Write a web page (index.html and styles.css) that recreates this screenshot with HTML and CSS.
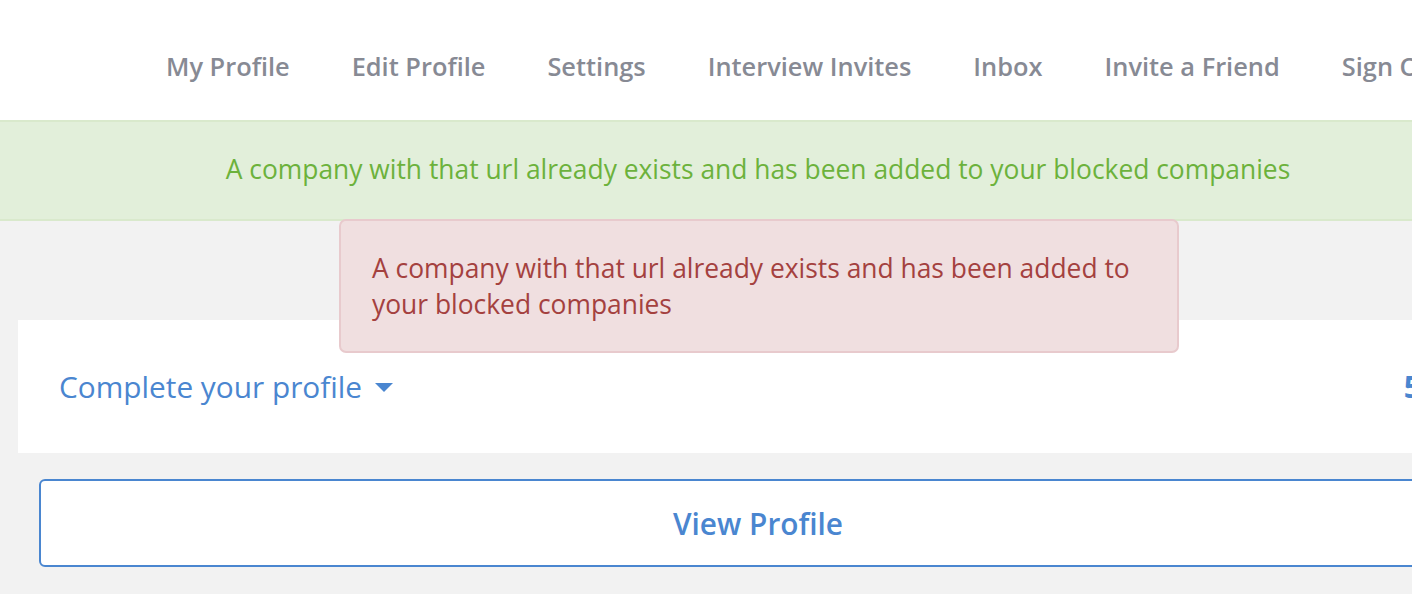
FILE: index.html
```html
<!DOCTYPE html>
<html>
<head>
<meta charset="utf-8">
<link rel="stylesheet" href="styles.css">
</head>
<body>
<div class="page">
  <header class="topbar">
    <nav class="nav">
      <a class="nav-item">My Profile</a>
      <a class="nav-item">Edit Profile</a>
      <a class="nav-item">Settings</a>
      <a class="nav-item">Interview Invites</a>
      <a class="nav-item">Inbox</a>
      <a class="nav-item">Invite a Friend</a>
      <a class="nav-item">Sign Out</a>
    </nav>
  </header>
  <div class="flash-success">A company with that url already exists and has been added to your blocked companies</div>
  <main class="main">
    <div class="alert-error">A company with that url already exists and has been added to your blocked companies</div>
    <section class="card">
      <div class="card-title">Complete your profile <span class="caret"></span></div>
      <div class="card-pct">50%</div>
    </section>
    <a class="btn-outline">View Profile</a>
  </main>
</div>
</body>
</html>
```

FILE: styles.css
```css
html, body {
  margin: 0;
  padding: 0;
  overflow: hidden;
  background: #f2f2f2;
}
.page {
  width: 1516px;
  font-family: "Open Sans", "Noto Sans", sans-serif;
  position: relative;
  min-height: 594px;
}
.topbar {
  background: #fff;
  height: 120px;
  display: flex;
  align-items: center;
  justify-content: flex-start;
}
.nav {
  display: flex;
  padding-left: 135px;
  padding-top: 12px;
}
.nav-item {
  color: #878a94;
  font-size: 25.4px;
  font-weight: 600;
  padding: 0 31px;
  white-space: nowrap;
}
.flash-success {
  box-sizing: border-box;
  height: 101px;
  padding-bottom: 4px;
  background: #e2efda;
  border-top: 2px solid #d9e9cc;
  border-bottom: 2px solid #d9e9cc;
  display: flex;
  align-items: center;
  justify-content: center;
  color: #6cb23c;
  font-size: 26.4px;
}
.main {
  position: relative;
  padding: 99px 18px 0 18px;
}
.alert-error {
  position: absolute;
  top: -2px;
  left: 339px;
  width: 774px;
  padding: 29px 31px 29px 31px;
  background: #f0dfe0;
  border: 2px solid #e8cacd;
  border-radius: 7px;
  color: #a4413f;
  font-size: 26.4px;
  line-height: 36px;
  z-index: 2;
}
.card {
  background: #fff;
  height: 133px;
  display: flex;
  align-items: center;
  justify-content: space-between;
  padding: 0 41px;
}
.card-title {
  color: #4a86d0;
  font-size: 29.8px;
  display: flex;
  align-items: center;
}
.caret {
  display: inline-block;
  width: 0;
  height: 0;
  border-left: 9px solid transparent;
  border-right: 9px solid transparent;
  border-top: 9px solid #4a86d0;
  margin-left: 13px;
  margin-top: 2px;
}
.card-pct {
  color: #4a86d0;
  font-size: 30px;
  font-weight: 700;
  margin-right: -8px;
}
.btn-outline {
  display: flex;
  align-items: center;
  justify-content: center;
  margin: 26px 21px 0 21px;
  height: 84px;
  border: 2px solid #4a86d0;
  border-radius: 6px;
  background: #fff;
  color: #4a86d0;
  font-size: 29.8px;
  font-weight: 600;
}
```
